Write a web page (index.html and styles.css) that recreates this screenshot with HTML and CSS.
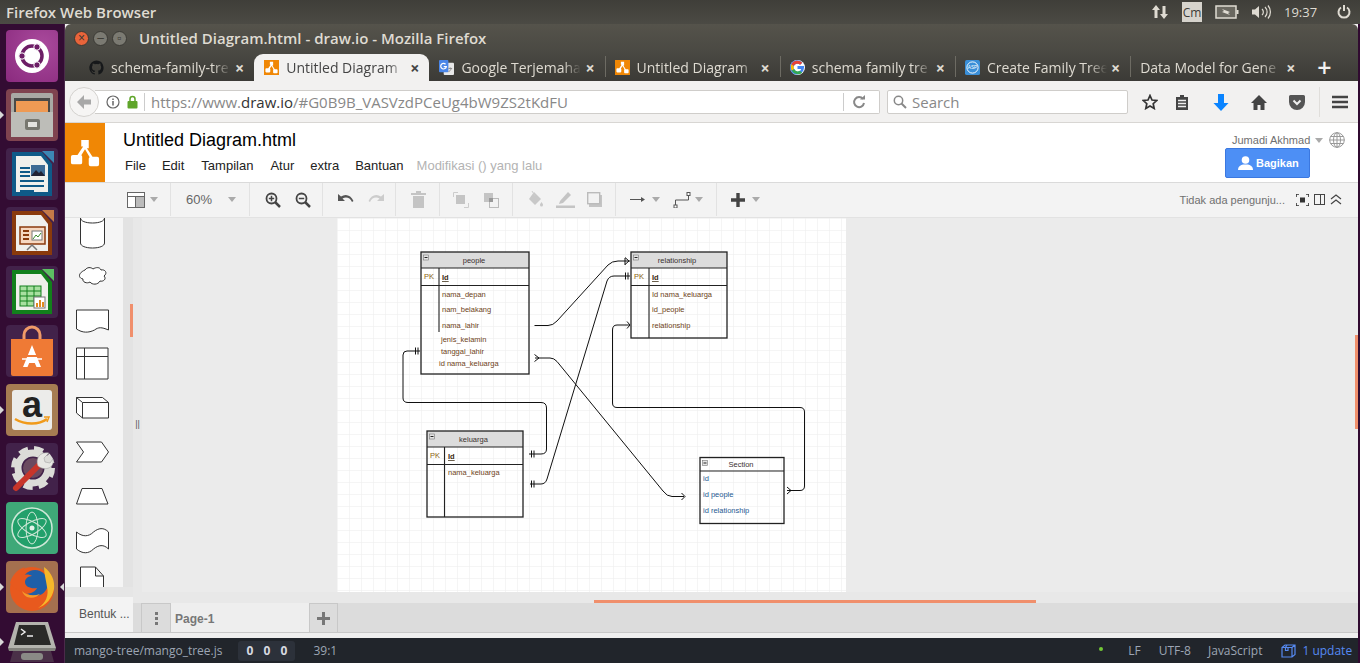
FILE: index.html
```html
<!DOCTYPE html>
<html lang="en">
<head>
    <meta charset="UTF-8">
    <meta name="viewport" content="width=device-width, initial-scale=1.0">
    <title>Untitled Diagram.html - draw.io - Mozilla Firefox</title>
    <link rel="stylesheet" href="styles.css">
</head>
<body>
    <svg class="defs" width="0" height="0">
        <symbol id="drawio" viewBox="0 0 16 16">
            <path d="M6 1h4v4.500H9l3 4.500h2.500a1 1 0 0 1 1 1v3a1 1 0 0 1-1 1h-3.500a1 1 0 0 1-1-1v-3a1 1 0 0 1 .5-.8L8 6 6 9.200a1 1 0 0 1 .5.800v3a1 1 0 0 1-1 1H1.500a1 1 0 0 1-1-1v-3a1 1 0 0 1 1-1H4l3-4.500H6z" fill="#fff"/>
        </symbol>
    </svg>

    <!-- ubuntu panel -->
    <div class="panel">
        <span class="panel-title">Firefox Web Browser</span>
        <div class="indicators">
            <svg class="ind-net" width="18" height="16" viewBox="0 0 18 16"><path d="M5 1l4 5H6.500v8h-3V6H1zM13 15l4-5h-2.500V2h-3v8H9z" fill="#dfdbd2"/></svg>
            <span class="ind-cm">Cm</span>
            <svg class="ind-bat" width="24" height="14" viewBox="0 0 24 14"><rect x="1" y="1" width="20" height="12" fill="#6a6860" stroke="#dfdbd2" stroke-width="1.500"/><rect x="21.500" y="5" width="2" height="4" fill="#dfdbd2"/><path d="M7 4l8 3-2 1 2 2-8-3 2-1z" fill="#dfdbd2"/></svg>
            <svg class="ind-vol" width="20" height="16" viewBox="0 0 20 16"><path d="M1 5.500h3L8 2v12L4 10.500H1z" fill="#dfdbd2"/><path d="M11 5a4 4 0 0 1 0 6M14 3a7 7 0 0 1 0 10M17 1.500a10 10 0 0 1 0 13" fill="none" stroke="#dfdbd2" stroke-width="1.200"/></svg>
            <span class="ind-time">19:37</span>
            <svg class="ind-power" width="16" height="16" viewBox="0 0 16 16"><path d="M8 1v6" stroke="#dfdbd2" stroke-width="2"/><path d="M5 3.500a5.500 5.500 0 1 0 6 0" fill="none" stroke="#dfdbd2" stroke-width="2"/></svg>
        </div>
    </div>

    <div class="desktop">
        <!-- launcher -->
        <nav class="launcher">
            <div class="tile tile-dash">
                <svg viewBox="0 0 52 52"><circle cx="26" cy="26" r="17" fill="#fff"/><circle cx="26" cy="26" r="10" fill="none" stroke="#6d1e66" stroke-width="3.500"/><circle cx="16" cy="26" r="3.200" fill="#6d1e66" stroke="#fff"/><circle cx="31" cy="17" r="3.200" fill="#6d1e66" stroke="#fff"/><circle cx="31" cy="35" r="3.200" fill="#6d1e66" stroke="#fff"/></svg>
            </div>
            <div class="tile tile-files running">
                <svg viewBox="0 0 52 52"><rect x="5" y="4" width="42" height="44" rx="2" fill="#a9a9a4"/><rect x="8" y="9" width="36" height="14" fill="#4a4a48"/><rect x="10" y="12" width="32" height="11" fill="#ee9a54"/><rect x="5" y="23" width="42" height="25" fill="#bdbdb8"/><rect x="19" y="30" width="15" height="11" rx="2" fill="#77776f"/><rect x="22" y="33" width="9" height="5" fill="#e4e4e0"/></svg>
            </div>
            <div class="tile tile-plain">
                <svg viewBox="0 0 52 52"><path d="M6 4h30l10 12v32H6z" fill="#0f5a88"/><path d="M10 8h25l7 9v27H10z" fill="#f0f0ec"/><path d="M36 3l12 0v12z" fill="#3c86b4"/><path d="M14 20h10M14 24h10M14 28h10M14 33h24M14 38h24M14 43h14" stroke="#0f5a88" stroke-width="2"/><rect x="25" y="17" width="14" height="11" fill="#3c6a94"/><path d="M25 28l5-6 3 3 2-2 4 5z" fill="#223"/></svg>
            </div>
            <div class="tile tile-plain">
                <svg viewBox="0 0 52 52"><path d="M6 4h30l10 12v32H6z" fill="#8a3a0c"/><path d="M10 8h25l7 9v27H10z" fill="#f0f0ec"/><path d="M36 3l12 0v12z" fill="#c47a48"/><rect x="14" y="20" width="25" height="17" fill="#f6d8c0" stroke="#8a3a0c" stroke-width="1.500"/><path d="M17 24h6M17 28h6M17 32h6" stroke="#8a3a0c" stroke-width="2"/><rect x="26" y="24" width="10" height="9" fill="#fff" stroke="#777"/><path d="M27 32l3-4 2 2 3-4" fill="none" stroke="#3a8a2a"/><path d="M21 43l5-5 5 5" fill="none" stroke="#777" stroke-width="1.500"/></svg>
            </div>
            <div class="tile tile-plain">
                <svg viewBox="0 0 52 52"><path d="M6 4h30l10 12v32H6z" fill="#12801c"/><path d="M10 8h25l7 9v27H10z" fill="#f0f0ec"/><path d="M36 3l12 0v12z" fill="#5cc062"/><rect x="14" y="20" width="21" height="20" fill="#a8e0a0" stroke="#12801c"/><path d="M14 25h21M14 30h21M14 35h21M21 20v20M28 20v20" stroke="#12801c"/><rect x="28" y="31" width="11" height="11" fill="#fff" stroke="#777"/><path d="M31 41v-4M34 41v-7M37 41v-5" stroke="#e08a20" stroke-width="2"/></svg>
            </div>
            <div class="tile tile-plain">
                <svg viewBox="0 0 52 52"><path d="M5 14h42v35a2 2 0 0 1-2 2H7a2 2 0 0 1-2-2z" fill="#ef7a35"/><path d="M18 14v-4a8 8 0 0 1 16 0v4" fill="none" stroke="#f09a68" stroke-width="3"/><path d="M26 20l-9 22h4.500l1.700-4h5.600l1.700 4h4.500z" fill="#fff"/><path d="M16 31h20" stroke="#ef7a35" stroke-width="2"/><path d="M16 34h20" stroke="#fff" stroke-width="1.500"/></svg>
            </div>
            <div class="tile tile-amazon running">
                <svg viewBox="0 0 52 52"><rect x="6" y="6" width="40" height="40" rx="3" fill="#ececea"/><text x="26" y="33" class="amz" text-anchor="middle">a</text><path d="M9 35c10 6 24 6 32 0" fill="none" stroke="#f09a1a" stroke-width="2.500"/><path d="M38 33l5 0-2 5" fill="none" stroke="#f09a1a" stroke-width="1.500"/></svg>
            </div>
            <div class="tile tile-plain">
                <svg viewBox="0 0 52 52"><circle cx="27" cy="25" r="19" fill="none" stroke="#dcdcd8" stroke-width="6" stroke-dasharray="9 6"/><circle cx="27" cy="25" r="15" fill="none" stroke="#dcdcd8" stroke-width="7"/><circle cx="27" cy="25" r="10" fill="#6b4a60"/><path d="M10 45l24-24" stroke="#c8352a" stroke-width="6" stroke-linecap="round"/><path d="M32 23c-3-7 2-15 11-13l-5 5 1 4 5 1 3-4c2 8-7 13-15 7z" fill="#e8e8e4" stroke="#999" stroke-width=".5"/></svg>
            </div>
            <div class="tile tile-atom">
                <svg viewBox="0 0 52 52"><circle cx="26" cy="26" r="20" fill="#22a06b" stroke="#cfe8d8" stroke-width="1.500"/><ellipse cx="26" cy="26" rx="16" ry="6" fill="none" stroke="#cfe8d8" transform="rotate(30 26 26)"/><ellipse cx="26" cy="26" rx="16" ry="6" fill="none" stroke="#cfe8d8" transform="rotate(-30 26 26)"/><ellipse cx="26" cy="26" rx="16" ry="6" fill="none" stroke="#cfe8d8" transform="rotate(90 26 26)"/><circle cx="26" cy="26" r="2.500" fill="#e4f2ea"/></svg>
            </div>
            <div class="tile tile-firefox running active">
                <svg viewBox="0 0 52 52"><circle cx="26" cy="28" r="22" fill="#e8591e"/><circle cx="29" cy="22" r="13" fill="#1f5fa8"/><path d="M38 6c8 6 11 14 10 22-2 10-8 16-16 19 8-5 11-13 9-21-1-7-3-14-3-20z" fill="#f7b72a"/><path d="M4 22c2-8 8-14 15-16-3 3-4 6-3 9 3-2 7-2 10 0-4 0-7 3-7 6 0 5 6 7 12 6-2 4-8 7-13 5-6-2-11-6-14-10z" fill="#e8591e"/><path d="M16 30c5 5 12 5 18 3-3 3-8 5-13 3-2-1-4-3-5-6z" fill="#f59a2a"/></svg>
            </div>
            <div class="tile tile-term running">
                <svg viewBox="0 0 52 44"><path d="M10 2h32l8 26H2z" fill="#b4b4ae"/><path d="M13 5h26l6 20H8z" fill="#2a2a28"/><path d="M15 9l4 3-4 3M21 16h6" fill="none" stroke="#eee" stroke-width="1.500"/><path d="M2 28h48l-1 3H3z" fill="#82827c"/><path d="M7 31h38l3 11H4z" fill="#4a3048"/><rect x="15" y="33" width="22" height="7" rx="3" fill="#8a8a86"/></svg>
            </div>
        </nav>

        <div class="window">
            <div class="titlebar">
                <span class="wbtn wbtn-close">×</span>
                <span class="wbtn">–</span>
                <span class="wbtn">▫</span>
                <span class="window-title">Untitled Diagram.html - draw.io - Mozilla Firefox</span>
            </div>

            <div class="tabs">
                <div class="tab">
                    <svg class="favicon" viewBox="0 0 16 16"><path fill="#16181a" d="M8 .5a7.700 7.700 0 0 0-2.400 15c.4.100.5-.2.500-.4v-1.300c-2.100.4-2.600-1-2.600-1-.4-.9-.9-1.200-.9-1.200-.7-.5.100-.5.100-.5.800.100 1.200.8 1.200.8.700 1.200 1.800.9 2.300.7 0-.5.300-.9.500-1.100-1.700-.2-3.500-.9-3.500-3.800 0-.8.300-1.500.8-2-.1-.2-.4-1 .1-2 0 0 .6-.2 2.100.8a7 7 0 0 1 3.800 0c1.500-1 2.100-.8 2.100-.8.400 1 .1 1.800.1 2 .5.500.8 1.200.8 2 0 2.900-1.800 3.600-3.500 3.800.3.200.5.700.5 1.400v2.100c0 .2.100.5.500.4A7.700 7.700 0 0 0 8 .5z"/></svg>
                    <span class="tab-text">schema-family-tre</span>
                    <span class="tab-x">×</span>
                </div>
                <div class="tab tab-active">
                    <span class="favicon fav-drawio"><svg viewBox="0 0 16 16"><use href="#drawio"/></svg></span>
                    <span class="tab-text">Untitled Diagram</span>
                    <span class="tab-x">×</span>
                </div>
                <div class="tab">
                    <svg class="favicon" viewBox="0 0 16 16"><rect x="5" y="3" width="11" height="13" rx="1" fill="#e8e8e8"/><rect width="10" height="13" rx="1" fill="#4a86e8"/><path d="M7 4.500A3 3 0 1 0 7.800 7H5" fill="none" stroke="#fff" stroke-width="1.300"/><path d="M10 9h4M12 8v1M13 9c-.5 2-1.500 3-3 3.500" fill="none" stroke="#888"/></svg>
                    <span class="tab-text">Google Terjemaha</span>
                    <span class="tab-x">×</span>
                </div>
                <div class="tab tab-sep">
                    <span class="favicon fav-drawio"><svg viewBox="0 0 16 16"><use href="#drawio"/></svg></span>
                    <span class="tab-text">Untitled Diagram</span>
                    <span class="tab-x">×</span>
                </div>
                <div class="tab tab-sep">
                    <svg class="favicon" viewBox="0 0 16 16"><circle cx="8" cy="8" r="8" fill="#fff"/><path d="M14.900 6.500H8v3.100h4a4.200 4.200 0 1 1-1.200-4.500l2.300-2.300A7.600 7.600 0 1 0 15 8c0-.5 0-1-.1-1.500z" fill="#4285f4"/><path d="M1.300 4.500l2.600 1.900A4.500 4.500 0 0 1 10.800 5.100l2.300-2.300A7.600 7.600 0 0 0 1.300 4.500z" fill="#ea4335"/><path d="M1 8c0 1.300.3 2.500.9 3.500l2.600-2A4.500 4.500 0 0 1 3.900 6.400L1.300 4.500A7.600 7.600 0 0 0 1 8z" fill="#fbbc05"/><path d="M1.900 11.500A7.600 7.600 0 0 0 13 13.500l-2.500-2a4.500 4.500 0 0 1-6-2z" fill="#34a853"/></svg>
                    <span class="tab-text">schema family tre</span>
                    <span class="tab-x">×</span>
                </div>
                <div class="tab tab-sep">
                    <svg class="favicon" viewBox="0 0 16 16"><rect width="16" height="16" rx="2" fill="#3a8fd8"/><circle cx="8" cy="8" r="6" fill="none" stroke="#fff"/><text x="8" y="10" class="fav-asp" text-anchor="middle">ASP</text></svg>
                    <span class="tab-text">Create Family Tree</span>
                    <span class="tab-x">×</span>
                </div>
                <div class="tab tab-sep tab-nofav">
                    <span class="tab-text">Data Model for Gene</span>
                    <span class="tab-x">×</span>
                </div>
                <span class="tab-new">+</span>
            </div>

            <div class="navbar">
                <span class="nav-back">
                    <svg width="18" height="16" viewBox="0 0 18 16"><path d="M9 1L2 8l7 7v-4.500h7v-5H9z" fill="#a8a8a8"/></svg>
                </span>
                <div class="urlbar">
                    <svg class="url-info" width="14" height="14" viewBox="0 0 14 14"><circle cx="7" cy="7" r="6" fill="none" stroke="#666" stroke-width="1.200"/><path d="M7 6v4.500M7 3.500v1.500" stroke="#666" stroke-width="1.500"/></svg>
                    <svg class="url-lock" width="11" height="14" viewBox="0 0 11 14"><path d="M3 6V4a2.500 2.500 0 0 1 5 0v2" fill="none" stroke="#5fa52a" stroke-width="1.500"/><rect x="0.500" y="6" width="10" height="7.500" rx="1" fill="#5fa52a"/></svg>
                    <span class="url-text">https://www.<b>draw.io</b>/#G0B9B_VASVzdPCeUg4bW9ZS2tKdFU</span>
                    <span class="url-reload">
                        <svg width="14" height="14" viewBox="0 0 14 14"><path d="M11 4a5 5 0 1 0 1 4" fill="none" stroke="#888" stroke-width="2"/><path d="M8 4.500h5V0z" fill="#888"/></svg>
                    </span>
                </div>
                <div class="searchbar">
                    <svg width="14" height="14" viewBox="0 0 14 14"><circle cx="5.500" cy="5.500" r="4.200" fill="none" stroke="#888" stroke-width="1.500"/><path d="M8.500 8.500l4.500 4.500" stroke="#888" stroke-width="2"/></svg>
                    <span>Search</span>
                </div>
                <svg class="nav-star" width="16" height="16" viewBox="0 0 16 16"><path d="M8 1.500l2 4.500 4.800.5-3.600 3.200 1 4.800L8 12.100l-4.200 2.400 1-4.800L1.200 6.500 6 6z" fill="none" stroke="#333" stroke-width="1.700"/></svg>
                <svg class="nav-list" width="14" height="17" viewBox="0 0 14 17"><path d="M1 3h12v13H1z" fill="#444"/><rect x="5" y="1" width="4" height="3" fill="#444"/><path d="M3 6.500h8M3 9.500h8M3 12.500h8" stroke="#eee" stroke-width="1.300"/></svg>
                <svg class="nav-down" width="16" height="17" viewBox="0 0 16 17"><path d="M5 0h6v9h4.500L8 17 .5 9H5z" fill="#0a84ff"/></svg>
                <svg class="nav-home" width="16" height="15" viewBox="0 0 16 15"><path d="M8 0L0 8h2.500v7h4v-5h3v5h4V8H16z" fill="#444"/></svg>
                <svg class="nav-pocket" width="16" height="15" viewBox="0 0 16 15"><path d="M1.500 0h13A1.500 1.500 0 0 1 16 1.500V7A8 8 0 0 1 0 7V1.500A1.500 1.500 0 0 1 1.500 0z" fill="#555"/><path d="M4.500 5.500L8 9l3.500-3.500" fill="none" stroke="#eee" stroke-width="2"/></svg>
                <span class="nav-sep"></span>
                <svg class="nav-menu" width="16" height="14" viewBox="0 0 16 14"><path d="M0 2h16M0 7h16M0 12h16" stroke="#444" stroke-width="2.500"/></svg>
            </div>

            <!-- draw.io -->
            <div class="app">
                <header class="app-head">
                    <div class="app-logo"><svg width="30" height="30" viewBox="0 0 16 16"><use href="#drawio"/></svg></div>
                    <div class="app-name">
                        <h1>Untitled Diagram.html</h1>
                        <div class="menu">
                            <span>File</span><span>Edit</span><span>Tampilan</span><span>Atur</span><span>extra</span><span>Bantuan</span><span class="menu-saved">Modifikasi () yang lalu</span>
                        </div>
                    </div>
                    <div class="account">
                        <div class="account-name">
                            <span>Jumadi Akhmad</span>
                            <i class="caret caret-user"></i>
                            <svg width="16" height="16" viewBox="0 0 16 16" fill="none" stroke="#999"><circle cx="8" cy="8" r="7.300"/><ellipse cx="8" cy="8" rx="3.500" ry="7.300"/><path d="M8 .5v15M.5 8h15M1.500 4.500h13M1.500 11.500h13"/></svg>
                        </div>
                        <button class="share">
                            <svg width="15" height="14" viewBox="0 0 15 14"><circle cx="7.500" cy="4" r="3.800" fill="#fff"/><path d="M0 14c0-4 3-5 5-5.500h5c2 .5 5 1.500 5 5.500z" fill="#fff"/></svg>
                            Bagikan
                        </button>
                    </div>
                </header>

                <div class="toolbar">
                    <div class="tb-group tb-view">
                        <svg width="18" height="16" viewBox="0 0 18 16"><rect x=".5" y=".5" width="17" height="15" fill="#fff" stroke="#666"/><path d="M.5 4.500h17M8.500 4.500v11" stroke="#666"/><rect x="9" y="5" width="8" height="10" fill="#bbb"/></svg>
                        <i class="caret"></i>
                    </div>
                    <div class="tb-group tb-zoomval">
                        <span class="tb-pct">60%</span>
                        <i class="caret"></i>
                    </div>
                    <div class="tb-group tb-pair">
                        <svg width="16" height="16" viewBox="0 0 16 16"><circle cx="6.500" cy="6.500" r="5" fill="none" stroke="#444" stroke-width="1.800"/><path d="M10 10l5 5" stroke="#444" stroke-width="2.500"/><path d="M3.800 6.500h5.400M6.500 3.800v5.400" stroke="#444" stroke-width="1.500"/></svg>
                        <svg width="16" height="16" viewBox="0 0 16 16"><circle cx="6.500" cy="6.500" r="5" fill="none" stroke="#444" stroke-width="1.800"/><path d="M10 10l5 5" stroke="#444" stroke-width="2.500"/><path d="M3.800 6.500h5.400" stroke="#444" stroke-width="1.500"/></svg>
                    </div>
                    <div class="tb-group tb-pair">
                        <svg width="16" height="11" viewBox="0 0 16 11"><path d="M0 0v7h7L4.500 4.500C8 2.500 12 3.500 14 8l1.500-1C13 1 7.500-.5 3 2.500z" fill="#555"/></svg>
                        <svg width="16" height="11" viewBox="0 0 16 11"><path d="M16 0v7H9l2.500-2.500C8 2.500 4 3.500 2 8L.5 7C3 1 8.500-.5 13 2.500z" fill="#ccc"/></svg>
                    </div>
                    <div class="tb-group tb-trash">
                        <svg width="15" height="17" viewBox="0 0 15 17"><path d="M0 2h15v2H0zM5 0h5v2H5zM2 5h11v12H2z" fill="#c4c4c4"/></svg>
                    </div>
                    <div class="tb-group tb-order">
                        <svg width="16" height="16" viewBox="0 0 16 16" fill="none" stroke="#ccc"><path d="M5 .5H.5V5M11 15.500h4.500V11"/><rect x="3" y="3" width="9" height="9" fill="#c4c4c4" stroke="none"/></svg>
                        <svg width="16" height="16" viewBox="0 0 16 16"><rect x="1" y="1" width="9" height="9" fill="#c4c4c4"/><rect x="6.500" y="6.500" width="9" height="9" fill="#f2f2f2" stroke="#bbb"/><rect x="6" y="6" width="4" height="4" fill="#999"/></svg>
                    </div>
                    <div class="tb-group tb-style">
                        <svg width="17" height="17" viewBox="0 0 17 17"><path d="M7 1l7 7-6 6-6-6z" fill="#c8c8c8"/><path d="M5 0l3 5" stroke="#ccc"/><path d="M14.500 11c1 1.500 1.500 2 1.500 3a1.500 1.500 0 0 1-3 0c0-1 .5-1.500 1.500-3z" fill="#c8c8c8"/></svg>
                        <svg width="19" height="17" viewBox="0 0 19 17"><path d="M4 10L12 1l3 3-8 8-4 1z" fill="#c4c4c4"/><rect y="14.500" width="19" height="2.500" fill="#c4c4c4"/></svg>
                        <svg width="15" height="15" viewBox="0 0 15 15"><rect x="2" y="3" width="13" height="12" fill="#c4c4c4"/><rect x=".7" y=".7" width="12" height="11" fill="#f2f2f2" stroke="#bbb" stroke-width="1.400"/></svg>
                    </div>
                    <div class="tb-group tb-conn">
                        <svg width="15" height="7" viewBox="0 0 15 7"><path d="M0 3.500h12" stroke="#555"/><path d="M11 1l4 2.500-4 2.500z" fill="#555"/></svg>
                        <i class="caret"></i>
                        <svg class="tb-way" width="18" height="16" viewBox="0 0 18 16" fill="none" stroke="#555"><path d="M2.500 13V8h13V3"/><rect x="1" y="13" width="3" height="3" fill="#fff"/><rect x="14" y="0.500" width="3" height="3" fill="#fff"/></svg>
                        <i class="caret"></i>
                    </div>
                    <div class="tb-group tb-insert">
                        <svg width="14" height="14" viewBox="0 0 14 14"><path d="M7 0v14M0 7h14" stroke="#444" stroke-width="3.400"/></svg>
                        <i class="caret"></i>
                    </div>
                    <div class="tb-right">
                        <span>Tidak ada pengunju...</span>
                        <svg width="13" height="12" viewBox="0 0 13 12"><path d="M0 3V0h3M10 0h3v3M13 9v3h-3M3 12H0V9" fill="none" stroke="#333" stroke-width="1.600"/><rect x="4" y="3.500" width="5" height="5" fill="#333"/></svg>
                        <svg width="11" height="11" viewBox="0 0 11 11"><rect x=".5" y=".5" width="10" height="10" fill="none" stroke="#444"/><path d="M6.500 .5v10" stroke="#444"/></svg>
                        <svg width="12" height="11" viewBox="0 0 12 11" fill="none" stroke="#444" stroke-width="1.200"><path d="M1 5l5-4 5 4M1 10l5-4 5 4"/></svg>
                    </div>
                </div>

                <div class="editor">
                    <div class="left">
                        <div class="shapes-row">
                            <svg class="shapes" width="58" height="369" viewBox="65 218 58 369" fill="#fff" stroke="#333" stroke-width="1">
                                <path d="M80.500 216v27c0 3 5 5 12 5s12-2 12-5v-27M80.500 218c0 3 5 5 12 5s12-2 12-5"/>
                                <path d="M85 270c2-3 6-3 8-1 3-2 7-2 8 1 4-1 7 3 3 6 3 3-1 6-4 5-2 4-8 4-10 1-3 2-8 0-7-3-5-1-5-6 2-9z"/>
                                <path d="M76.500 310h32v20c-7-3-10-3-14 0-6 3-12 3-18-1z"/>
                                <path d="M76.500 348h31.500v31H76.500z M76.500 356.500h31.500 M84.500 348v31"/>
                                <path d="M76.500 397.500h26l6 5v15.500H82.500l-6-5zM82.500 402.500h26M82.500 402.500v15.500M76.500 397.500l6 5"/>
                                <path d="M76.500 442h25l7 10-7 10h-25l7-10z"/>
                                <path d="M82 488.500h20l6 15.500H76.500z"/>
                                <path d="M76.500 532c6 5 12 5 17 0 5-4 10-5 15 0v17c-5-5-10-4-15 0-5 5-11 5-17 0z"/>
                                <path d="M80.500 587v-20h15l8 9v11M95.500 567v9h8"/>
                            </svg>
                            <div class="shapes-scroll"></div>
                        </div>
                        <div class="shapes-hscroll"></div>
                        <div class="shapes-label">Bentuk ...</div>
                    </div>
                    <div class="right">
                        <div class="canvas-row">
                            <div class="splitter">||</div>
                            <div class="canvas">
                                <svg class="paper" width="509" height="374" viewBox="337 218 509 374">
                                    <defs>
                                        <pattern id="grid" x="337" y="218" width="12" height="12" patternUnits="userSpaceOnUse">
                                            <path d="M12 0H0V12" fill="none" stroke="#ececec"/>
                                        </pattern>
                                    </defs>
                                    <rect x="337" y="218" width="509" height="374" fill="#fff"/>
                                    <rect x="337" y="218" width="509" height="374" fill="url(#grid)"/>

                                    <g class="links">
                                        <path d="M534.500 325.500H548Q553 325.500 557 321L608 265Q612 261 618 261H630"/>
                                        <path d="M625 257.500L629 261 625 264.500M625 258v7"/>
                                        <path d="M530 484H541Q545.500 484 547 479L607 281Q609 276 614 276H630"/>
                                        <path d="M625.500 272.500v7M628 272.500v7M531.500 480.500v7M534 480.500v7"/>
                                        <path d="M420 351H407Q403 351 403 355V398Q403 402.500 408 402.500H541Q546.500 402.500 546.500 408V449Q546.500 454 541 454H529"/>
                                        <path d="M415.500 347.500v7M418 347.500v7M531.500 450.500v7M534 450.500v7"/>
                                        <path d="M535 358H550Q554 358 557 361.500L663 491Q667 496.500 672 496.500H684"/>
                                        <path d="M534.500 354.500L539 358 534.500 361.500M681.500 493L685 496.500 681.500 500"/>
                                        <path d="M787 490.500H800Q804.500 490.500 804.500 486V412Q804.500 407.500 800 407.500H617Q612.500 407.500 612.500 403V330Q612.500 325 617 325H630"/>
                                        <path d="M787 487L791 490.500 787 494M627 321.500L630 325 627 328.500"/>
                                    </g>

                                    <g class="table">
                                        <rect class="t-head" x="421" y="252" width="108" height="16"/>
                                        <rect class="t-box" x="421" y="252" width="108" height="122"/>
                                        <path class="t-line" d="M421 268H529M421 285.500H529M439 268V332"/>
                                        <rect class="t-min" x="423.500" y="255" width="5" height="5"/>
                                        <path class="t-dash" d="M424.500 257.500h3"/>
                                        <text class="t-title" x="474" y="263" text-anchor="middle">people</text>
                                        <text class="t-pk" x="424" y="279">PK</text>
                                        <text class="t-key" x="442" y="280">Id</text>
                                        <text class="t-row" x="442" y="297">nama_depan</text>
                                        <text class="t-row" x="442" y="312">nam_belakang</text>
                                        <text class="t-row" x="442" y="328">nama_lahir</text>
                                        <text class="t-row" x="441" y="342">jenis_kelamin</text>
                                        <text class="t-row" x="441" y="354">tanggal_lahir</text>
                                        <text class="t-row" x="439" y="366">id nama_keluarga</text>
                                    </g>
                                    <g class="table">
                                        <rect class="t-head" x="631" y="252" width="96" height="16"/>
                                        <rect class="t-box" x="631" y="252" width="96" height="86"/>
                                        <path class="t-line" d="M631 268H727M631 285.500H727M649 268V338"/>
                                        <rect class="t-min" x="633.500" y="255" width="5" height="5"/>
                                        <path class="t-dash" d="M634.500 257.500h3"/>
                                        <text class="t-title" x="677" y="263" text-anchor="middle">relationship</text>
                                        <text class="t-pk" x="634" y="279">PK</text>
                                        <text class="t-key" x="652" y="280">Id</text>
                                        <text class="t-row" x="652" y="297">Id nama_keluarga</text>
                                        <text class="t-row" x="652" y="312">id_people</text>
                                        <text class="t-row" x="652" y="328">relationship</text>
                                    </g>
                                    <g class="table">
                                        <rect class="t-head" x="427" y="431" width="96" height="16"/>
                                        <rect class="t-box" x="427" y="431" width="96" height="86"/>
                                        <path class="t-line" d="M427 447H523M427 464.500H523M444.500 447V517"/>
                                        <rect class="t-min" x="429.500" y="434" width="5" height="5"/>
                                        <path class="t-dash" d="M430.500 436.500h3"/>
                                        <text class="t-title" x="473.500" y="442" text-anchor="middle">keluarga</text>
                                        <text class="t-pk" x="430" y="458">PK</text>
                                        <text class="t-key" x="448" y="459">Id</text>
                                        <text class="t-row" x="448" y="475">nama_keluarga</text>
                                    </g>
                                    <g class="table">
                                        <rect class="t-box" x="700" y="457.500" width="84" height="66"/>
                                        <path class="t-line" d="M700 471H784"/>
                                        <rect class="t-min" x="702.500" y="460.500" width="5" height="5"/>
                                        <path class="t-dash" d="M703.500 463h3"/>
                                        <text class="t-title" x="741" y="467" text-anchor="middle">Section</text>
                                        <text class="t-blue" x="703" y="481">id</text>
                                        <text class="t-blue" x="703" y="497">id people</text>
                                        <text class="t-blue" x="703" y="513">id relationship</text>
                                    </g>
                                </svg>
                                <div class="vscroll"></div>
                            </div>
                        </div>
                        <div class="hscroll"><span class="hscroll-thumb"></span></div>
                        <div class="pagebar">
                            <span class="page-menu"><i></i><i></i><i></i></span>
                            <span class="page-tab">Page-1</span>
                            <span class="page-add">
                                <svg width="13" height="13" viewBox="0 0 13 13"><path d="M6.500 0v13M0 6.500h13" stroke="#777" stroke-width="3"/></svg>
                            </span>
                        </div>
                    </div>
                </div>
                <div class="app-foot"></div>
            </div>

            <!-- atom status bar -->
            <footer class="status">
                <span class="st-path">mango-tree/mango_tree.js</span>
                <span class="st-count"><b>0</b><b>0</b><b>0</b></span>
                <span class="st-pos">39:1</span>
                <span class="st-dot"></span>
                <span class="st-lf">LF</span>
                <span class="st-enc">UTF-8</span>
                <span class="st-lang">JavaScript</span>
                <span class="st-update">
                    <svg width="15" height="14" viewBox="0 0 15 14" fill="none" stroke="#568af2" stroke-width="1.200"><path d="M1 3.500L4 1h10v9.500L11 13H1zM1 3.500h10V13M11 3.500L14 1M6 1L4.500 3.500v3h2.500V3.500"/></svg>
                    1 update
                </span>
            </footer>
        </div>
    </div>
</body>
</html>
```

FILE: styles.css
```css
* {
    box-sizing: border-box;
}
html, body {
    margin: 0;
    height: 100%;
    overflow: hidden;
}
body {
    width: 1360px;
    height: 663px;
    background: #300a30;
    font-family: "Liberation Sans", Arial, sans-serif;
}
svg {
    display: block;
    flex: none;
}
.defs {
    position: absolute;
}

/* panel */
.panel {
    height: 24px;
    display: flex;
    align-items: center;
    justify-content: space-between;
    padding-left: 6px;
    background: linear-gradient(#3f3e39, #4b4a44);
    color: #dfdbd2;
    font-family: "Open Sans", sans-serif;
    font-size: 13px;
}
.panel-title {
    font-size: 15px;
    font-weight: 600;
}
.indicators {
    display: flex;
    align-items: center;
    font-weight: 400;
}
.ind-cm {
    width: 20px;
    height: 20px;
    margin-left: 13px;
    background: #d6d3cc;
    color: #3c3b37;
    font-size: 12px;
    line-height: 21px;
    text-align: center;
}
.ind-bat { margin-left: 13px; }
.ind-vol { margin-left: 12px; }
.ind-time { margin-left: 13px; width: 35px; }
.ind-power { margin: 0 8px 0 17px; }

.desktop {
    display: flex;
    height: 639px;
}

/* launcher */
.launcher {
    width: 65px;
    flex: none;
    display: flex;
    flex-direction: column;
    gap: 7px;
    padding: 6px 0 0 6px;
    background: #330c33;
    border-right: 1px solid #4a2a4a;
}
.tile {
    position: relative;
    width: 52px;
    height: 52px;
    flex: none;
    border-radius: 4px;
}
.tile svg {
    width: 52px;
    height: 52px;
}
.amz {
    font-family: "Liberation Sans", sans-serif;
    font-size: 36px;
    font-weight: 700;
    fill: #222;
}
.tile-dash { background: radial-gradient(circle at 70% 30%, #a94a9c, #8a2a7e); }
.tile-files { background: #7f434f; }
.tile-plain { background: #42224a; }
.tile-amazon { background: #a67c52; }
.tile-atom { background: #3fa878; }
.tile-firefox { background: #a4704f; }
.tile-term {
    height: 44px;
    background: none;
}
.tile-term svg {
    height: 44px;
}
.running::before {
    content: "";
    position: absolute;
    left: -6px;
    top: 50%;
    margin-top: -4px;
    border: 4px solid transparent;
    border-left-color: #d8d8d8;
    border-right: 0;
}
.active::after {
    content: "";
    position: absolute;
    right: -6px;
    top: 50%;
    margin-top: -4px;
    border: 4px solid transparent;
    border-right-color: #d8d8d8;
    border-left: 0;
}

/* firefox window */
.window {
    flex: 1;
    min-width: 0;
    display: flex;
    flex-direction: column;
    margin-right: 2px;
    background: #f2f1f0;
}
.titlebar {
    height: 28px;
    flex: none;
    display: flex;
    align-items: center;
    padding-left: 9px;
    gap: 4px;
    background: linear-gradient(#55534b, #4a4943);
    border-radius: 6px 6px 0 0;
}
.wbtn {
    width: 15px;
    height: 15px;
    border-radius: 50%;
    background: #7b7a72;
    border: 1px solid #3a3934;
    color: #3a3934;
    font-size: 12px;
    line-height: 12px;
    text-align: center;
}
.wbtn-close {
    background: #e9643a;
}
.window-title {
    margin-left: 8px;
    color: #dfdbd2;
    font-family: "Open Sans", sans-serif;
    font-size: 15px;
    font-weight: 600;
}

.tabs {
    height: 29px;
    flex: none;
    display: flex;
    padding: 2px 0 0 14px;
    background: linear-gradient(#4a4943, #3b3a36);
    color: #dfdbd2;
    font-family: "Open Sans", sans-serif;
    font-size: 14px;
}
.tab {
    width: 175.2px;
    flex: none;
    display: flex;
    align-items: center;
    padding: 0 0 0 10px;
    position: relative;
}
.tab-sep::before {
    content: "";
    position: absolute;
    left: 0;
    top: 2px;
    bottom: 4px;
    border-left: 1px solid #6d6b63;
}
.tab-active {
    background: #f2f1f0;
    color: #444;
    border-radius: 9px 9px 0 0;
}
.tab-nofav .tab-text {
    width: 142px;
    margin-left: 0;
}
.favicon {
    width: 15px;
    height: 15px;
    flex: none;
}
.fav-drawio {
    display: block;
    padding: 1px;
    background: #f08705;
}
.fav-drawio svg {
    width: 13px;
    height: 13px;
}
.fav-asp {
    fill: #fff;
    font-size: 5px;
    font-family: "Liberation Sans", sans-serif;
}
.tab-text {
    width: 120px;
    flex: none;
    margin-left: 7px;
    white-space: nowrap;
    -webkit-mask-image: linear-gradient(to right, #000 85%, transparent);
    mask-image: linear-gradient(to right, #000 85%, transparent);
}
.tab-x {
    margin-left: 4px;
    font-size: 16px;
    font-weight: 700;
    line-height: 16px;
}
.tab-new {
    margin-left: 12px;
    font-size: 25px;
    font-weight: 600;
    line-height: 26px;
    color: #f2f1f0;
}

.navbar {
    height: 42px;
    flex: none;
    display: flex;
    align-items: center;
    position: relative;
    padding: 1px 0 0 30px;
    background: #f2f1f0;
    border-bottom: 1px solid #d8d6d3;
}
.nav-back {
    position: absolute;
    left: 4px;
    top: 6px;
    width: 30px;
    height: 30px;
    display: flex;
    align-items: center;
    justify-content: center;
    border: 1px solid #d4d2cf;
    border-radius: 50%;
    background: #f6f5f4;
}
.urlbar {
    width: 785px;
    height: 24px;
    display: flex;
    align-items: center;
    padding-left: 11px;
    background: #fff;
    border: 1px solid #cfcdca;
    border-left: 0;
    border-radius: 0 2px 2px 0;
}
.url-lock { margin-left: 7px; }
.url-text {
    width: 699px;
    flex: none;
    margin-left: 6px;
    padding-left: 6px;
    border-left: 1px solid #ccc;
    color: #888;
    font-family: "Open Sans", sans-serif;
    font-size: 15px;
    line-height: 18px;
    white-space: nowrap;
}
.url-text b {
    font-weight: 400;
    color: #333;
}
.url-reload {
    height: 18px;
    display: flex;
    align-items: center;
    padding-left: 8px;
    border-left: 1px solid #ccc;
}
.searchbar {
    width: 241px;
    height: 24px;
    display: flex;
    align-items: center;
    gap: 5px;
    margin: 0 14px 0 7px;
    padding-left: 5px;
    background: #fff;
    border: 1px solid #cfcdca;
    border-radius: 2px;
    color: #888;
    font-family: "Open Sans", sans-serif;
    font-size: 15px;
}
.nav-list { margin-left: 17px; }
.nav-down { margin-left: 24px; }
.nav-home { margin-left: 22px; }
.nav-pocket { margin-left: 22px; }
.nav-sep {
    width: 1px;
    height: 30px;
    margin-left: 14px;
    background: #e0dedb;
}
.nav-menu { margin-left: 12px; }

/* draw.io */
.app {
    flex: 1;
    min-height: 0;
    display: flex;
    flex-direction: column;
    background: #fff;
}
.app-head {
    height: 60px;
    flex: none;
    display: flex;
    border-bottom: 1px solid #dadada;
}
.app-logo {
    width: 40px;
    height: 59px;
    flex: none;
    display: flex;
    align-items: center;
    justify-content: center;
    background: #f08705;
}
.app-name {
    margin-left: 18px;
    flex: 1;
}
.app-name h1 {
    margin: 7px 0 0 0;
    font-size: 18px;
    font-weight: 400;
    line-height: 20px;
    color: #000;
}
.menu {
    display: flex;
    gap: 16px;
    margin-top: 8px;
    margin-left: 2px;
    font-size: 13px;
    line-height: 16px;
    color: #222;
}
.menu span:nth-child(3),
.menu span:nth-child(4) { margin-left: 1px; }
.menu-saved {
    margin-left: -3px;
    color: #b3b3b3;
}
.account {
    width: 133px;
    flex: none;
    display: flex;
    flex-direction: column;
    align-items: flex-start;
}
.account-name {
    display: flex;
    align-items: center;
    margin: 9px 0 0 7px;
    height: 16px;
    font-size: 11px;
    color: #707070;
}
.caret {
    width: 0;
    height: 0;
    flex: none;
    border: 4px solid transparent;
    border-top: 5px solid #aaa;
    border-bottom: 0;
}
.caret-user {
    margin: 0 6px 0 5px;
}
.share {
    width: 85px;
    height: 30px;
    display: flex;
    align-items: center;
    gap: 3px;
    padding: 0 0 0 12px;
    background: #4d8ff5;
    border: 1px solid #3b78e0;
    border-radius: 2px;
    color: #fff;
    font-family: "Liberation Sans", sans-serif;
    font-size: 11px;
    font-weight: 700;
}

.toolbar {
    height: 35px;
    flex: none;
    display: flex;
    background: #f3f3f3;
    border-bottom: 1px solid #e2e2e2;
}
.tb-group {
    display: flex;
    align-items: center;
    height: 33px;
    border-right: 1px solid #e2e2e2;
}
.tb-view { width: 106px; padding-left: 62px; gap: 5px; }
.tb-zoomval { width: 79px; padding-left: 15px; }
.tb-pct {
    width: 42px;
    font-size: 13px;
    color: #666;
}
.tb-pair { width: 73px; padding-left: 15px; gap: 14px; }
.tb-trash { width: 44px; padding-left: 15px; }
.tb-order { width: 73px; padding-left: 13px; gap: 14px; }
.tb-style { width: 103px; padding-left: 14px; gap: 12px; }
.tb-conn { width: 101px; padding-left: 14px; gap: 7px; }
.tb-way { margin-left: 6px; margin-right: -3px; }
.tb-insert { padding-left: 14px; gap: 7px; border-right: 0; }
.tb-right {
    margin-left: auto;
    display: flex;
    align-items: center;
    height: 33px;
    padding-right: 16px;
    gap: 5px;
    font-size: 11px;
    color: #707070;
}
.tb-right span {
    margin-right: 6px;
}

.editor {
    height: 414px;
    flex: none;
    display: flex;
}
.left {
    width: 68px;
    flex: none;
    display: flex;
    flex-direction: column;
}
.shapes-row {
    height: 369px;
    display: flex;
    position: relative;
}
.shapes {
    background: #f5f5f5;
}
.shapes-scroll {
    flex: 1;
    background: #e3e3e3;
}
.shapes-scroll::after {
    content: "";
    position: absolute;
    left: 65px;
    top: 86px;
    width: 3px;
    height: 33px;
    background: #f08f6c;
}
.shapes-hscroll {
    height: 10px;
    background: #e6e6e6;
}
.shapes-label {
    flex: 1;
    padding: 10px 0 0 14px;
    background: #f3f3f3;
    font-size: 12px;
    color: #555;
    white-space: nowrap;
    overflow: hidden;
}
.right {
    flex: 1;
    min-width: 0;
    display: flex;
    flex-direction: column;
}
.canvas-row {
    height: 374px;
    flex: none;
    display: flex;
}
.splitter {
    width: 9px;
    flex: none;
    padding-top: 201px;
    background: #e8e8e8;
    color: #555;
    font-size: 9px;
    text-align: center;
}
.canvas {
    flex: 1;
    position: relative;
    padding-left: 195px;
    background: #ebebeb;
}
.vscroll {
    position: absolute;
    right: 0;
    top: 117px;
    width: 3px;
    height: 94px;
    background: #f08f6c;
}
.hscroll {
    height: 11px;
    flex: none;
    padding: 8px 0 0 461px;
    background: #e8e8e8;
}
.hscroll-thumb {
    display: block;
    width: 442px;
    height: 3px;
    background: #f08f6c;
}
.pagebar {
    flex: 1;
    display: flex;
    padding-left: 8px;
    background: #dcdcdc;
}
.page-menu {
    width: 30px;
    display: flex;
    flex-direction: column;
    align-items: center;
    justify-content: center;
    gap: 2px;
    border: 1px solid #c8c8c8;
    border-bottom: 0;
}
.page-menu i {
    width: 3px;
    height: 3px;
    background: #777;
}
.page-tab {
    width: 138px;
    padding: 9px 0 0 4px;
    background: #eee;
    font-size: 12px;
    font-weight: 700;
    color: #777;
}
.page-add {
    width: 29px;
    display: flex;
    align-items: center;
    justify-content: center;
    border: 1px solid #c8c8c8;
    border-bottom: 0;
}
.app-foot {
    flex: 1;
    background: #efefef;
    border-top: 1px solid #c8c8c8;
}

/* diagram */
.paper {
    font-family: "Liberation Sans", sans-serif;
}
.links path {
    fill: none;
    stroke: #111;
    stroke-width: 1;
}
.t-head {
    fill: #dcdcdc;
}
.t-box {
    fill: none;
    stroke: #222;
    stroke-width: 1.300;
}
.t-line {
    fill: none;
    stroke: #222;
    stroke-width: 1.100;
}
.t-min {
    fill: #e4e4e4;
    stroke: #777;
    stroke-width: .6;
}
.t-dash {
    stroke: #222;
    stroke-width: 1;
}
.t-title, .t-row, .t-pk, .t-key, .t-blue {
    font-size: 7.500px;
}
.t-title { fill: #3a3030; }
.t-row { fill: #6e3f18; }
.t-pk { fill: #8a6410; }
.t-key {
    fill: #3a2a10;
    font-weight: 700;
    text-decoration: underline;
}
.t-blue { fill: #1f5a92; }

/* atom */
.status {
    height: 25px;
    flex: none;
    display: flex;
    align-items: center;
    padding-left: 9px;
    background: #21252b;
    color: #9da5b4;
    font-family: "Open Sans", sans-serif;
    font-size: 12px;
}
.st-count {
    width: 57px;
    height: 20px;
    display: flex;
    align-items: center;
    justify-content: space-around;
    margin-left: 16px;
    padding: 0 3px;
    background: #2c313a;
    border-radius: 3px;
    color: #d7dae0;
}
.st-pos { margin-left: 18px; }
.st-dot {
    width: 4px;
    height: 4px;
    margin-left: 762px;
    margin-bottom: 4px;
    border-radius: 50%;
    background: #73c936;
}
.st-lf { margin-left: 25px; }
.st-enc { margin-left: 18px; }
.st-lang { margin-left: 17px; }
.st-update {
    display: flex;
    align-items: center;
    gap: 6px;
    margin-left: 19px;
    color: #568af2;
}
```
